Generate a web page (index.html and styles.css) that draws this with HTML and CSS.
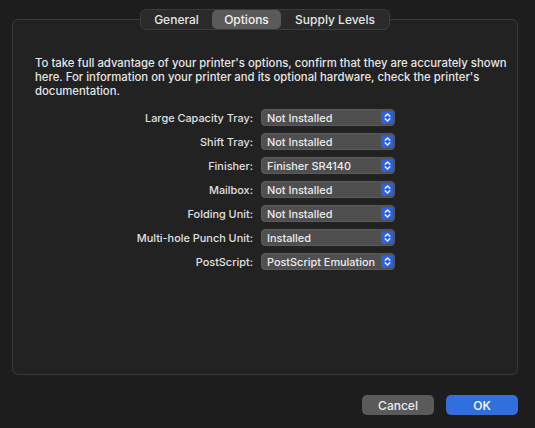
FILE: index.html
```html
<!DOCTYPE html>
<html>
<head>
<meta charset="utf-8">
<link rel="stylesheet" href="styles.css">
</head>
<body>
<div class="page">
  <div class="tabs">
    <div class="tab">General</div>
    <div class="tab selected">Options</div>
    <div class="tab">Supply Levels</div>
  </div>
  <div class="box">
    <p class="desc">To take full advantage of your printer's options, confirm that they are accurately shown here. For information on your printer and its optional hardware, check the printer's documentation.</p>
    <div class="form">
      <div class="label">Large Capacity Tray:</div>
      <div class="popup"><span>Not Installed</span><span class="stepper"><svg viewBox="0 0 11 13" width="11" height="13"><path d="M3.2 5.2 L5.5 3 L7.8 5.2 M3.2 7.8 L5.5 10 L7.8 7.8" fill="none" stroke="#fff" stroke-width="1.3" stroke-linecap="round" stroke-linejoin="round"/></svg></span></div>
      <div class="label">Shift Tray:</div>
      <div class="popup"><span>Not Installed</span><span class="stepper"><svg viewBox="0 0 11 13" width="11" height="13"><path d="M3.2 5.2 L5.5 3 L7.8 5.2 M3.2 7.8 L5.5 10 L7.8 7.8" fill="none" stroke="#fff" stroke-width="1.3" stroke-linecap="round" stroke-linejoin="round"/></svg></span></div>
      <div class="label">Finisher:</div>
      <div class="popup"><span>Finisher SR4140</span><span class="stepper"><svg viewBox="0 0 11 13" width="11" height="13"><path d="M3.2 5.2 L5.5 3 L7.8 5.2 M3.2 7.8 L5.5 10 L7.8 7.8" fill="none" stroke="#fff" stroke-width="1.3" stroke-linecap="round" stroke-linejoin="round"/></svg></span></div>
      <div class="label">Mailbox:</div>
      <div class="popup"><span>Not Installed</span><span class="stepper"><svg viewBox="0 0 11 13" width="11" height="13"><path d="M3.2 5.2 L5.5 3 L7.8 5.2 M3.2 7.8 L5.5 10 L7.8 7.8" fill="none" stroke="#fff" stroke-width="1.3" stroke-linecap="round" stroke-linejoin="round"/></svg></span></div>
      <div class="label">Folding Unit:</div>
      <div class="popup"><span>Not Installed</span><span class="stepper"><svg viewBox="0 0 11 13" width="11" height="13"><path d="M3.2 5.2 L5.5 3 L7.8 5.2 M3.2 7.8 L5.5 10 L7.8 7.8" fill="none" stroke="#fff" stroke-width="1.3" stroke-linecap="round" stroke-linejoin="round"/></svg></span></div>
      <div class="label">Multi-hole Punch Unit:</div>
      <div class="popup"><span>Installed</span><span class="stepper"><svg viewBox="0 0 11 13" width="11" height="13"><path d="M3.2 5.2 L5.5 3 L7.8 5.2 M3.2 7.8 L5.5 10 L7.8 7.8" fill="none" stroke="#fff" stroke-width="1.3" stroke-linecap="round" stroke-linejoin="round"/></svg></span></div>
      <div class="label">PostScript:</div>
      <div class="popup"><span>PostScript Emulation</span><span class="stepper"><svg viewBox="0 0 11 13" width="11" height="13"><path d="M3.2 5.2 L5.5 3 L7.8 5.2 M3.2 7.8 L5.5 10 L7.8 7.8" fill="none" stroke="#fff" stroke-width="1.3" stroke-linecap="round" stroke-linejoin="round"/></svg></span></div>
    </div>
  </div>
  <div class="buttons">
    <div class="btn cancel">Cancel</div>
    <div class="btn ok">OK</div>
  </div>
</div>
</body>
</html>
```

FILE: styles.css
```css
html, body {
  margin: 0;
  padding: 0;
  background: #1d1d1d;
  width: 535px;
  height: 428px;
  overflow: hidden;
}
body {
  font-family: Inter, "Liberation Sans", sans-serif;
  font-weight: 500;
  color: #e2e2e2;
}
.page {
  padding: 9px 17px 0 12px;
}
.tabs {
  position: relative;
  z-index: 1;
  display: flex;
  width: 248px;
  height: 19px;
  margin: 0 auto -11px;
  padding: 0;
  background: #2a2a2a;
  border: 1px solid #3c3c3c;
  border-radius: 6px;
  font-size: 12px;
  color: #e6e6e6;
}
.tab {
  display: flex;
  align-items: center;
  justify-content: center;
  height: 19px;
}
.tab:nth-child(1) { width: 71px; }
.tab:nth-child(2) { width: 69px; }
.tab:nth-child(3) { width: 108px; }
.tab.selected {
  background: #5a5a5a;
  border-radius: 5px;
  color: #f2f2f2;
}
.box {
  box-sizing: border-box;
  width: 506px;
  height: 356px;
  background: #222222;
  border: 1px solid #393939;
  border-radius: 6px;
  padding: 36px 7px 0 22px;
}
.desc {
  margin: 0;
  font-size: 11.35px;
  line-height: 14px;
  color: #e6e6e6;
}
.form {
  display: grid;
  grid-template-columns: 218px 134px;
  column-gap: 8px;
  row-gap: 7px;
  margin: 11px 0 0 0;
  align-items: center;
}
.label {
  text-align: right;
  font-size: 10.9px;
  color: #e0e0e0;
}
.popup {
  box-sizing: border-box;
  height: 17px;
  display: flex;
  align-items: center;
  justify-content: space-between;
  background: #4f4f4f;
  border: 1px solid #5a5a5a;
  border-radius: 4px;
  padding: 0 1px 0 5px;
  font-size: 10.9px;
  color: #ececec;
}
.stepper {
  width: 12px;
  height: 13px;
  background: #2e62dc;
  border-radius: 3px;
  display: flex;
  align-items: center;
  justify-content: center;
}
.stepper svg { display: block; }
.buttons {
  display: flex;
  justify-content: flex-end;
  gap: 12px;
  width: 506px;
  margin-top: 20px;
}
.btn {
  width: 72px;
  height: 20px;
  border-radius: 5px;
  display: flex;
  align-items: center;
  justify-content: center;
  font-size: 12px;
  color: #ececec;
}
.cancel { background: #5a5a5a; }
.ok { background: #3170dc; color: #ffffff; }
```
